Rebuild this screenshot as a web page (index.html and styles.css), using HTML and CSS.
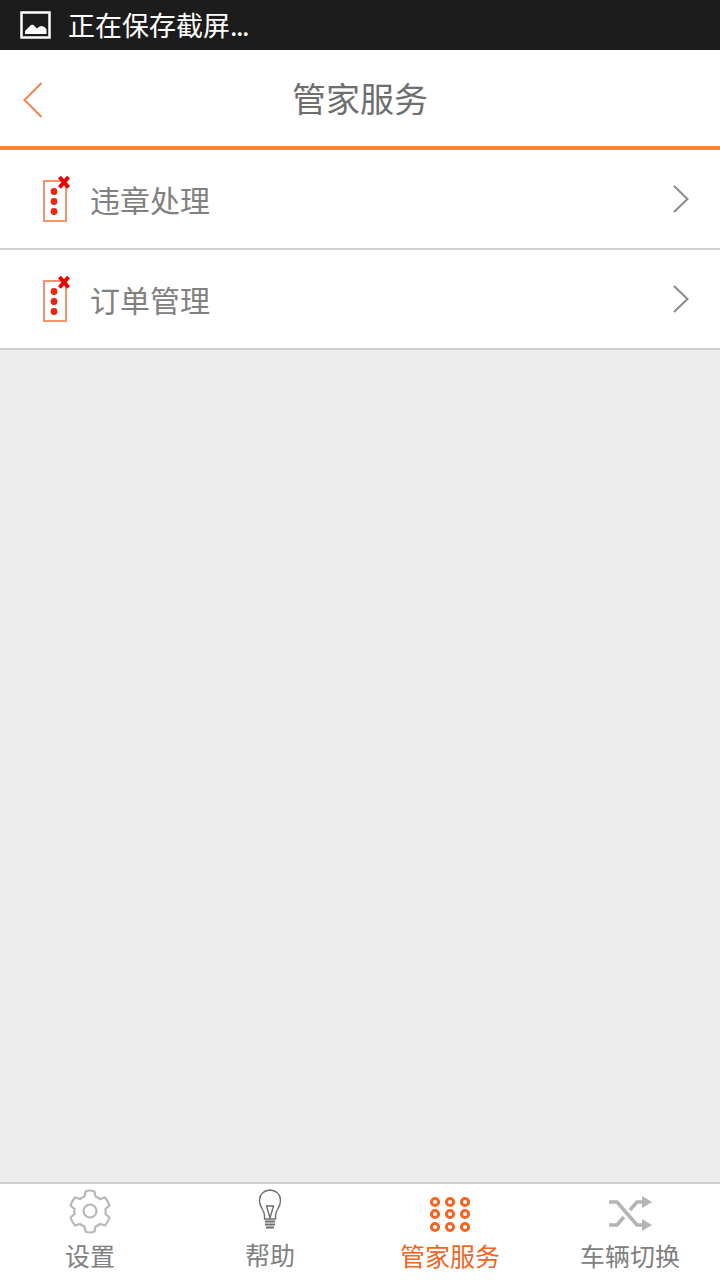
FILE: index.html
```html
<!DOCTYPE html>
<html lang="zh-CN">
<head>
  <meta charset="UTF-8">
  <meta name="viewport" content="width=device-width, initial-scale=1.0">
  <title>管家服务</title>
  <link rel="stylesheet" href="styles.css">
</head>
<body>
  <div class="status__bar">
    <svg class="status__icon" width="32" height="28" viewBox="0 0 32 28">
      <rect x="1.500" y="1.500" width="28" height="25" fill="none" stroke="#fff" stroke-width="2.500"/>
      <path d="M5 23v-3l6-6q2-1 3.500 1l2.500 2.500q2-2.500 4.500-2.500q4 .5 5 3.500v4.500z" fill="#fff"/>
    </svg>
    <span class="status__text">正在保存截屏<span class="status__dots">...</span></span>
  </div>

  <header class="header">
    <svg class="header__back" width="24" height="40" viewBox="0 0 24 40">
      <path d="M20.500 3 3.500 20l17 17" fill="none" stroke="#f08550" stroke-width="2"/>
    </svg>
    <h1 class="header__title">管家服务</h1>
  </header>

  <main class="list">
    <div class="list__row">
      <svg class="list__icon" width="34" height="48" viewBox="0 0 34 48">
        <rect x="6" y="6" width="22" height="40" fill="none" stroke="#f4936a" stroke-width="2"/>
        <circle cx="16" cy="16.500" r="3.400" fill="#e9250f"/>
        <circle cx="16" cy="26.500" r="3.400" fill="#e9250f"/>
        <circle cx="16" cy="36.500" r="3.400" fill="#e9250f"/>
        <path d="M21.500 2l9 10.500M30.500 2l-9 10.500" stroke="#f00000" stroke-width="4"/>
      </svg>
      <span class="list__text">违章处理</span>
      <svg class="list__arrow" width="18" height="30" viewBox="0 0 18 30">
        <path d="M2 2l13.500 13L2 28" fill="none" stroke="#8a8a8a" stroke-width="2"/>
      </svg>
    </div>
    <div class="list__row">
      <svg class="list__icon" width="34" height="48" viewBox="0 0 34 48">
        <rect x="6" y="6" width="22" height="40" fill="none" stroke="#f4936a" stroke-width="2"/>
        <circle cx="16" cy="16.500" r="3.400" fill="#e9250f"/>
        <circle cx="16" cy="26.500" r="3.400" fill="#e9250f"/>
        <circle cx="16" cy="36.500" r="3.400" fill="#e9250f"/>
        <path d="M21.500 2l9 10.500M30.500 2l-9 10.500" stroke="#f00000" stroke-width="4"/>
      </svg>
      <span class="list__text">订单管理</span>
      <svg class="list__arrow" width="18" height="30" viewBox="0 0 18 30">
        <path d="M2 2l13.500 13L2 28" fill="none" stroke="#8a8a8a" stroke-width="2"/>
      </svg>
    </div>
  </main>

  <nav class="tabbar">
    <div class="tabbar__item">
      <svg class="tabbar__icon" width="46" height="46" viewBox="0 0 46 46">
        <g fill="none" stroke="#b8b8b8" stroke-width="2.200">
          <circle cx="23" cy="23" r="6.500"/>
          <path d="M18.500 3.500q4.500-2 9 0l1 5q2.500 1 4.500 2.500l5-1.500q3 3.500 4.500 8l-4 3.500q.4 2.500 0 5l4 3.500q-1.500 4.500-4.500 8l-5-1.500q-2 1.500-4.500 2.500l-1 5q-4.500 2-9 0l-1-5q-2.500-1-4.500-2.500l-5 1.500q-3-3.500-4.500-8l4-3.500q-.4-2.500 0-5l-4-3.500q1.500-4.500 4.500-8l5 1.500q2-1.500 4.500-2.500z"/>
        </g>
      </svg>
      <span class="tabbar__label">设置</span>
    </div>
    <div class="tabbar__item tabbar__item--help">
      <svg class="tabbar__icon" width="46" height="46" viewBox="0 0 46 46">
        <g fill="none" stroke="#6e6e6e" stroke-width="1.400">
          <path d="M17.500 31v-3.500q0-3-2.500-7q-2.500-3.500-2.500-8.500q.5-9 10.500-10q10 1 10.500 10q0 5-2.500 8.500q-2.500 4-2.500 7v3.500z"/>
          <path d="M19.500 18h7l-3.500 12z"/>
        </g>
        <path d="M18 33.500h10M18 36.500h10M19 39.500h8" stroke="#6e6e6e" stroke-width="1.800"/>
      </svg>
      <span class="tabbar__label">帮助</span>
    </div>
    <div class="tabbar__item tabbar__item--active">
      <svg class="tabbar__icon" width="46" height="46" viewBox="0 0 46 46">
        <g fill="none" stroke="#f26522" stroke-width="3">
          <circle cx="8" cy="14" r="3.600"/><circle cx="23" cy="14" r="3.600"/><circle cx="38" cy="14" r="3.600"/>
          <circle cx="8" cy="26" r="3.600"/><circle cx="23" cy="26" r="3.600"/><circle cx="38" cy="26" r="3.600"/>
          <circle cx="8" cy="39" r="3.600"/><circle cx="23" cy="39" r="3.600"/><circle cx="38" cy="39" r="3.600"/>
        </g>
      </svg>
      <span class="tabbar__label">管家服务</span>
    </div>
    <div class="tabbar__item">
      <svg class="tabbar__icon" width="46" height="46" viewBox="0 0 46 46">
        <path d="M2 14h8l20 23h6M2 37h8l7-8M23 22l7-8h6" fill="none" stroke="#b4b4b4" stroke-width="3.600"/>
        <path d="M35 8l10 6-10 6zM35 31l10 6-10 6z" fill="#b4b4b4"/>
      </svg>
      <span class="tabbar__label">车辆切换</span>
    </div>
  </nav>
</body>
</html>
```

FILE: styles.css
```css
* {
  margin: 0;
  padding: 0;
  box-sizing: border-box;
}

html,
body {
  height: 100%;
}

body {
  display: flex;
  flex-direction: column;
  background: #ededed;
  font-family: "Noto Sans CJK SC", "Noto Sans", sans-serif;
}

.status__bar {
  display: flex;
  align-items: center;
  height: 50px;
  padding-left: 20px;
  background: #1c1c1c;
}

.status__text {
  margin-left: 16px;
  color: #fff;
  font-size: 27px;
  line-height: 50px;
  white-space: nowrap;
}

.status__dots {
  letter-spacing: -1.500px;
}

.header {
  position: relative;
  display: flex;
  align-items: center;
  justify-content: center;
  height: 100px;
  background: #fff;
  border-bottom: 4px solid #f58631;
}

.header__back {
  position: absolute;
  left: 21px;
  top: 30px;
}

.header__title {
  color: #6e6e6e;
  font-size: 34px;
  font-weight: 400;
  line-height: 96px;
}

.list {
  flex: 1;
}

.list__row {
  display: flex;
  align-items: center;
  height: 100px;
  padding: 0 30px 0 38px;
  background: #fff;
  border-bottom: 2px solid #cfcfcf;
}

.list__text {
  flex: 1;
  margin-left: 18px;
  color: #808080;
  font-size: 30px;
}

.tabbar {
  display: grid;
  grid-template-columns: repeat(4, 1fr);
  height: 98px;
  background: #fff;
  border-top: 2px solid #cfcfcf;
}

.tabbar__item {
  display: flex;
  flex-direction: column;
  align-items: center;
  padding-top: 4px;
}

.tabbar__icon {
  display: block;
  height: 46px;
}

.tabbar__label {
  margin-top: 3px;
  color: #808080;
  font-size: 25px;
  line-height: 36px;
  white-space: nowrap;
}

.tabbar__item--help .tabbar__label {
  margin-top: 2px;
}

.tabbar__item--active .tabbar__label {
  color: #f26522;
}
```
